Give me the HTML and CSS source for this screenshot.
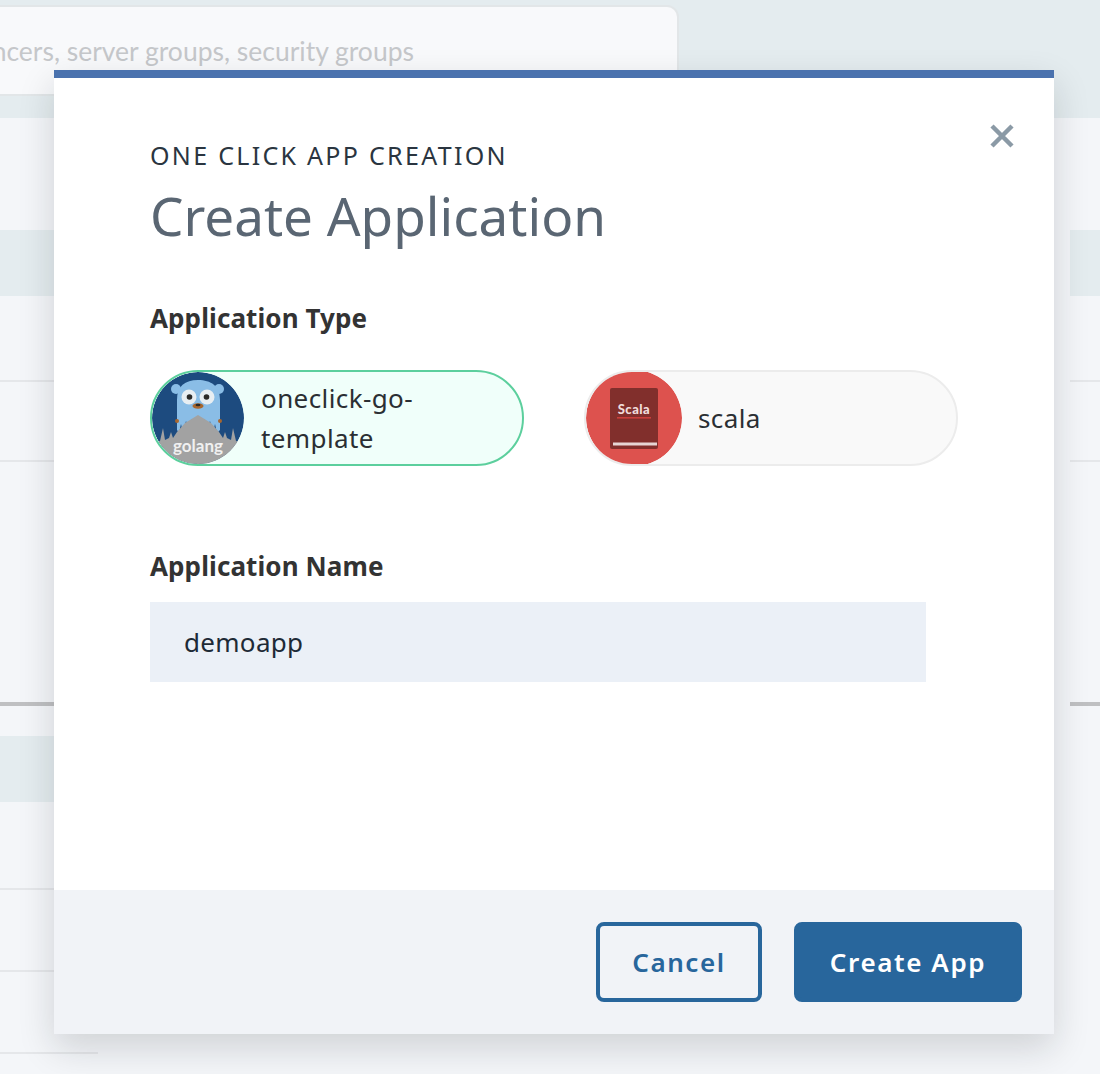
FILE: index.html
```html
<!DOCTYPE html>
<html lang="en">
<head>
<meta charset="utf-8">
<title>Create Application</title>
<link rel="stylesheet" href="styles.css">
</head>
<body>
<header class="topband">
  <div class="search"><span class="placeholder">load balancers, server groups, security groups</span></div>
</header>
<main class="backdrop">
  <div class="col col-left">
    <div class="band"></div>
    <div class="row row-a"></div>
    <div class="row row-b"></div>
    <div class="row row-c"></div>
    <div class="band"></div>
    <div class="row row-d"></div>
    <div class="row row-e"></div>
    <div class="row row-e"></div>
  </div>
  <div class="col col-right">
    <div class="band"></div>
    <div class="row row-a"></div>
    <div class="row row-b"></div>
    <div class="row row-c"></div>
  </div>
</main>
<section class="modal">
  <div class="modal-body">
    <svg class="close" viewBox="0 0 24 24"><path d="M2 2 22 22M22 2 2 22"/></svg>
    <p class="eyebrow">ONE CLICK APP CREATION</p>
    <h1 class="title">Create Application</h1>
    <h2 class="label label-type">Application Type</h2>
    <div class="pills">
      <div class="pill pill-on">
        <svg class="avatar" viewBox="0 0 92 92">
          <circle cx="46" cy="46" r="46" fill="#1d4b7f"/>
          <circle cx="24" cy="17" r="5" fill="#8abde6"/>
          <circle cx="67" cy="17" r="5" fill="#8abde6"/>
          <path d="M25 58V28C25 14 33 8 46 8s22 6 22 20v30l-3 3-2-9-2 9-3-12-3 8-3-10-3 6-3-8-3 8-3-6-3 10-3-8-3 12-2-9-2 9z" fill="#8abde6"/>
          <circle cx="37" cy="25" r="7.500" fill="#e8eef2"/>
          <circle cx="55" cy="25" r="7.500" fill="#e8eef2"/>
          <circle cx="37.500" cy="25" r="2.800" fill="#2b2a28"/>
          <circle cx="54.500" cy="25" r="2.800" fill="#2b2a28"/>
          <ellipse cx="46" cy="34" rx="5.500" ry="2.800" fill="#a8662e"/>
          <ellipse cx="46" cy="33" rx="2.500" ry="1.300" fill="#2b2a28"/>
          <circle cx="25" cy="49" r="2" fill="#a8662e"/>
          <circle cx="68" cy="49" r="2" fill="#a8662e"/>
          <path d="M0 92V72l8-3 3-13 2 12 4-2 2-6 2 6 4-6 8-9 13-8 13 8 8 9 4 6 2-6 2 6 4 2 2-12 3 13 8 3v20z" fill="#a2a2a2"/>
          <text class="golang" x="46" y="80" text-anchor="middle">golang</text>
        </svg>
        <span class="pill-text">oneclick-go-template</span>
      </div>
      <div class="pill pill-off">
        <svg class="avatar" viewBox="0 0 96 96">
          <circle cx="48" cy="48" r="48" fill="#dd524e"/>
          <rect x="24" y="18" width="48" height="61" rx="2" fill="#812f2c"/>
          <text class="scala" x="48" y="44" text-anchor="middle">Scala</text>
          <rect x="31" y="47" width="34" height="1.600" fill="#c9403c"/>
          <rect x="27" y="72.500" width="44" height="3" fill="#e6d5d4"/>
        </svg>
        <span class="pill-text">scala</span>
      </div>
    </div>
    <h2 class="label label-name">Application Name</h2>
    <div class="input">demoapp</div>
  </div>
  <footer class="modal-footer">
    <button class="btn btn-ghost">Cancel</button>
    <button class="btn btn-solid">Create App</button>
  </footer>
</section>
</body>
</html>
```

FILE: styles.css
```css
* { box-sizing: border-box; }
html, body { margin: 0; height: 1074px; overflow: hidden; }
body { background: #f4f6f9; font-family: "Noto Sans", sans-serif; position: relative; }

.topband { height: 118px; background: #e4ecef; padding-top: 5px; }
.search {
  width: 699px; height: 91px; margin-left: -20px;
  background: #f8f9fb; border: 2px solid #e2e6e8; border-radius: 0 12px 12px 0;
  display: flex; justify-content: flex-end; align-items: center;
  padding-right: 263px;
}
.placeholder { font-family: "Lato", sans-serif; font-size: 26.5px; color: #c5c7ca; white-space: nowrap; }

.backdrop { display: grid; grid-template-columns: 98px 1fr 30px; height: 956px; }
.col { display: flex; flex-direction: column; padding-top: 112px; }
.col-left { grid-column: 1; }
.col-right { grid-column: 3; }
.band { height: 66px; background: #e4ecef; flex: none; }
.row { flex: none; border-bottom: 2px solid #e5e7ea; }
.row-a { height: 86px; }
.row-b { height: 80px; }
.row-c { height: 244px; border-bottom: 4px solid #bfc0c2; margin-bottom: 30px; }
.row-d { height: 88px; }
.row-e { height: 82px; }

.modal {
  position: absolute; left: 54px; top: 70px; width: 1000px; height: 964px;
  background: #fff; border-top: 8px solid #4a72ae;
  box-shadow: 0 14px 34px rgba(20, 22, 28, .16);
  display: flex; flex-direction: column;
}
.modal-body { flex: 1; padding: 61px 96px 0; position: relative; }
.close { position: absolute; left: 936px; top: 46px; width: 24px; height: 24px; }
.close path { fill: none; stroke: #8b9aa6; stroke-width: 4.5; }
.eyebrow { margin: 0; font-size: 25px; line-height: 32px; letter-spacing: 2.3px; color: #2a3540; }
.title { margin: 13px 0 0; font-weight: 400; font-size: 53px; line-height: 64px; color: #5a6673; }
.label { margin: 0; font-size: 26px; line-height: 32px; font-weight: 700; letter-spacing: .1px; color: #333; }
.label-type { margin-top: 54px; }
.pills { display: flex; gap: 60px; margin-top: 36px; }
.pill { width: 374px; height: 96px; border-radius: 48px; display: flex; align-items: center; border: 2px solid; overflow: hidden; }
.pill-on { background: #f0fffa; border-color: #5ccf9d; }
.pill-off { background: #f9f9f9; border-color: #ececec; }
.avatar { width: 92px; height: 92px; flex: none; border-radius: 50%; }
.pill-off .avatar { width: 96px; height: 96px; }
.pill-text { font-size: 26px; line-height: 40px; letter-spacing: .4px; color: #2b2f33; margin-left: 17px; width: 200px; }
.pill-off .pill-text { margin-left: 16px; }
.golang { font-family: "Lato", sans-serif; font-size: 17px; font-weight: 700; fill: #f0f0f0; }
.scala { font-family: "Lato", sans-serif; font-size: 13px; font-weight: 900; letter-spacing: .5px; fill: #f0dcdb; }
.label-name { margin-top: 84px; }
.input { width: 776px; height: 80px; margin-top: 20px; background: #ebf0f7; padding-left: 34px; display: flex; align-items: center; font-size: 26px; letter-spacing: .3px; color: #1e2a36; }

.modal-footer { height: 144px; background: #f1f3f7; display: flex; justify-content: flex-end; align-items: center; gap: 32px; padding-right: 32px; }
.btn { height: 80px; border-radius: 8px; font-family: "Noto Sans", sans-serif; font-size: 26px; font-weight: 600; letter-spacing: 1.6px; border: 4px solid #28669c; }
.btn-ghost { width: 166px; background: transparent; color: #28669c; }
.btn-solid { width: 228px; background: #28669c; color: #fff; }
```
